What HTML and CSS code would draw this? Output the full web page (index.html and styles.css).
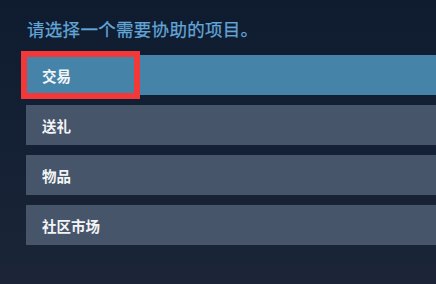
FILE: index.html
```html
<!DOCTYPE html>
<html lang="zh-CN">
<head>
<meta charset="utf-8">
<title>帮助</title>
<link rel="stylesheet" href="styles.css">
</head>
<body>
<div class="page">
  <h1 class="title">请选择一个需要协助的项目。</h1>
  <div class="list">
    <div class="row active"><span class="label">交易</span><span class="mark"></span></div>
    <div class="row"><span class="label">送礼</span></div>
    <div class="row"><span class="label">物品</span></div>
    <div class="row"><span class="label">社区市场</span></div>
  </div>
</div>
</body>
</html>
```
FILE: styles.css
```css
html, body {
  margin: 0;
  padding: 0;
  height: 100%;
}
body {
  background: linear-gradient(180deg, #0f1b2e 0%, #142034 50%, #1b2537 100%);
  font-family: "Noto Sans CJK SC", "Noto Sans", sans-serif;
  overflow: hidden;
}
.page {
  padding: 17px 0 0 26px;
}
.title {
  margin: 0 0 0 1px;
  font-size: 17.5px;
  font-weight: normal;
  line-height: 24px;
  letter-spacing: 0.3px;
  color: #62a6d8;
  -webkit-text-stroke: 0.25px #62a6d8;
}
.list {
  display: flex;
  flex-direction: column;
  gap: 10px;
  margin-top: 14px;
}
.row {
  position: relative;
  height: 40px;
  display: flex;
  align-items: center;
  padding-left: 16px;
  background: #465569;
  color: #f2f4f6;
  font-size: 14.5px;
  font-weight: bold;
}
.row.active {
  background: #4583a8;
}
.mark {
  position: absolute;
  left: -5px;
  top: -4px;
  width: 107px;
  height: 36px;
  border: 6px solid #f23838;
}
```
